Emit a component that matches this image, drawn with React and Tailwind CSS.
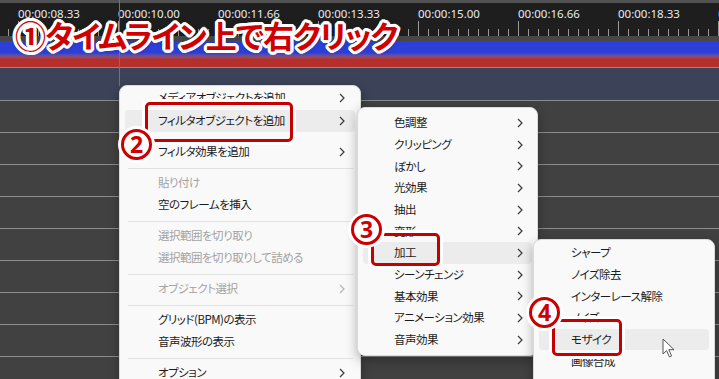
import clsx from "clsx";

const jp = "font-['Noto_Sans_CJK_JP','Noto_Sans',sans-serif] [font-feature-settings:'palt']";

const labels = ["00:00:08.33", "00:00:10.00", "00:00:11.66", "00:00:13.33", "00:00:15.00", "00:00:16.66", "00:00:18.33", "00:00:20.00"];

function Chevron({ dim }) {
  return (
    <svg width="6" height="10" viewBox="0 0 6 10" className="shrink-0">
      <path d="M1 1l4 4-4 4" fill="none" stroke={dim ? "#b4b4b4" : "#3a3a3a"} strokeWidth="1.2" />
    </svg>
  );
}

function Item({ label, sub, dim, active, className }) {
  return (
    <div className={clsx("mx-[5px] flex items-center justify-between rounded-[4px]", active && "bg-[#ececec]", className)}>
      <span className={dim ? "text-[#a3a3a3]" : "text-[#1b1b1b]"}>{label}</span>
      {sub && <Chevron dim={dim} />}
    </div>
  );
}

function Sep() {
  return <div className="ml-[8px] mr-[7px] mt-[5px] mb-[3px] h-px bg-[#e2e2e2]" />;
}

function Num({ n, className }) {
  return (
    <div className={clsx("absolute flex h-[31px] w-[31px] items-center justify-center rounded-full border-[3px] border-[#cc0000] bg-white shadow-[0_0_0_3px_#fff]", className)}>
      <span className="font-['Noto_Sans',sans-serif] text-[23px] font-bold leading-none text-[#cc0000]">{n}</span>
    </div>
  );
}

function RedBox({ className }) {
  return <div className={clsx("absolute rounded-[5px] border-[3px] border-[#c40000] shadow-[0_0_0_3px_#fff]", className)} />;
}

function Ruler() {
  const minor = [];
  for (let x = 8; x < 719; x += 10) minor.push(x);
  return (
    <div className="relative h-[33px] bg-[#1e1e1e]">
      <svg width="719" height="33" className="absolute left-0 top-0">
        {minor.map((x) => (
          <line key={x} x1={x + 0.5} x2={x + 0.5} y1={(x - 18) % 100 === 0 ? 18 : 26} y2="33" stroke="#9a9a9a" strokeWidth="1" />
        ))}
      </svg>
      <div className="relative flex pl-[18px] pt-[4px] font-['Noto_Sans',sans-serif] text-[11.5px] leading-[14px] text-[#e4ecf5]">
        {labels.map((l, i) => (
          <span key={l} className={clsx("w-[100px] shrink-0", i === 7 && "text-[#3b9cff]")}>{l}</span>
        ))}
      </div>
    </div>
  );
}

export default function App() {
  const tracks = [0, 1, 2, 3, 4, 5, 6, 7, 8];
  return (
    <div className="relative h-[379px] w-[719px] overflow-hidden bg-[#404040]">
      {/* タイムライン */}
      <div className="flex flex-col">
        <div className="h-[3px] bg-[#525252]" />
        <Ruler />
        <div className="h-[5px] bg-[#474747]" />
        <div className="h-[12px] bg-[#2c3fd9]" />
        <div className="h-[6px] bg-gradient-to-b from-[#2c3fd9] to-[#b5302b]" />
        <div className="h-[8px] bg-[#b5302b]" />
        <div className="h-px bg-[#8a8a8a]" />
        <div className="h-[32px] bg-[#3c4258]" />
        {tracks.map((t) => (
          <div key={t} className="flex flex-col">
            <div className="h-px bg-[#8c8c8c]" />
            <div className="h-[31px] bg-[#414141]" />
          </div>
        ))}
      </div>

      {/* 再生位置 */}
      <div className="absolute left-[119px] top-0 h-[86px] w-px bg-[#c8504a]" />

      {/* タイトル */}
      <div className={clsx(jp, "absolute left-[15px] top-[19px] whitespace-nowrap text-[31px] font-bold leading-none tracking-[-1px] text-[#d00000] [text-shadow:3px_0_0_#fff,-3px_0_0_#fff,0_3px_0_#fff,0_-3px_0_#fff,2px_2px_0_#fff,-2px_2px_0_#fff,2px_-2px_0_#fff,-2px_-2px_0_#fff,3px_1px_0_#fff,-3px_1px_0_#fff,3px_-1px_0_#fff,-3px_-1px_0_#fff,1px_3px_0_#fff,-1px_3px_0_#fff,1px_-3px_0_#fff,-1px_-3px_0_#fff,0_0_6px_rgba(0,0,0,0.5)]")}>
        ①タイムライン上で右クリック
      </div>

      {/* メインメニュー */}
      <div className={clsx(jp, "absolute left-[119px] top-[85px] h-[310px] w-[242px] rounded-lg border border-[#dadada] bg-[#f9f9f9] text-[11.5px] tracking-[-0.5px] shadow-[0_4px_12px_rgba(0,0,0,0.3)]")}>
        <Item label="メディアオブジェクトを追加" sub className="h-[24px] pl-[33px] pr-[10px]" />
        <Item label="フィルタオブジェクトを追加" sub active className="h-[22px] pl-[33px] pr-[10px]" />
        <Item label="フィルタ効果を追加" sub className="mt-[9px] h-[22px] pl-[33px] pr-[10px]" />
        <Sep />
        <Item label="貼り付け" dim className="h-[22px] pl-[33px] pr-[10px]" />
        <Item label="空のフレームを挿入" className="h-[22px] pl-[33px] pr-[10px]" />
        <Sep />
        <Item label="選択範囲を切り取り" dim className="h-[22px] pl-[33px] pr-[10px]" />
        <Item label="選択範囲を切り取りして詰める" dim className="h-[22px] pl-[33px] pr-[10px]" />
        <Sep />
        <Item label="オブジェクト選択" sub dim className="h-[22px] pl-[33px] pr-[10px]" />
        <Sep />
        <Item label="グリッド(BPM)の表示" className="h-[22px] pl-[33px] pr-[10px]" />
        <Item label="音声波形の表示" className="h-[22px] pl-[33px] pr-[10px]" />
        <Sep />
        <Item label="オプション" sub className="h-[22px] pl-[33px] pr-[10px]" />
      </div>

      {/* フィルタオブジェクト サブメニュー */}
      <div className={clsx(jp, "absolute left-[357px] top-[107px] w-[181px] rounded-lg border border-[#dadada] bg-[#f9f9f9] pb-[4px] pt-[4px] text-[11.5px] tracking-[-0.5px] shadow-[0_4px_12px_rgba(0,0,0,0.3)]")}>
        {["色調整", "クリッピング", "ぼかし", "光効果", "抽出", "変形", "加工", "シーンチェンジ", "基本効果", "アニメーション効果", "音声効果"].map((l) => (
          <Item key={l} label={l} sub active={l === "加工"} className="h-[21.7px] pl-[31px] pr-[9px]" />
        ))}
      </div>

      {/* 加工 サブメニュー */}
      <div className={clsx(jp, "absolute left-[533px] top-[239px] h-[160px] w-[182px] rounded-lg border border-[#dadada] bg-[#f9f9f9] pt-[2px] text-[11.5px] tracking-[-0.5px] shadow-[0_4px_12px_rgba(0,0,0,0.3)]")}>
        {["シャープ", "ノイズ除去", "インターレース解除", "ノイズ", "モザイク", "画像合成"].map((l) => (
          <Item key={l} label={l} active={l === "モザイク"} className="h-[21.7px] pl-[32px] pr-[9px]" />
        ))}
      </div>

      {/* 注記 */}
      <RedBox className="left-[145px] top-[102px] h-[40px] w-[148px]" />
      <Num n="2" className="left-[121px] top-[129px]" />
      <RedBox className="left-[371px] top-[233px] h-[33px] w-[69px]" />
      <Num n="3" className="left-[351px] top-[214px]" />
      <RedBox className="left-[552px] top-[319px] h-[37px] w-[70px]" />
      <Num n="4" className="left-[529px] top-[297px]" />

      {/* カーソル */}
      <svg width="12" height="20" viewBox="0 0 12 20" className="absolute left-[662px] top-[338px]">
        <path d="M1 1v15l3.6-3.4 2.8 6.3 2.2-1-2.8-6.2H12z" fill="#fff" stroke="#555" strokeWidth="1" strokeLinejoin="round" />
      </svg>
    </div>
  );
}
